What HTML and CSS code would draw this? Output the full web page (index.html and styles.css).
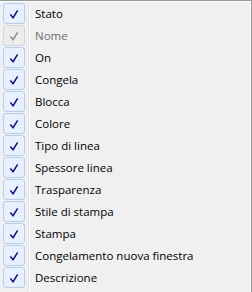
FILE: index.html
```html
<!DOCTYPE html>
<html>
<head>
    <title>Colonne</title>
    <link rel="stylesheet" href="styles.css">
</head>
<body>
    <div class="menu">
        <div class="item"><span class="box"><svg viewBox="0 0 22 21"><path d="M7 10.5 L10 14 L15 6"/></svg></span><span class="label">Stato</span></div>
        <div class="item disabled"><span class="box"><svg viewBox="0 0 22 21"><path d="M7 10.5 L10 14 L15 6"/></svg></span><span class="label">Nome</span></div>
        <div class="item"><span class="box"><svg viewBox="0 0 22 21"><path d="M7 10.5 L10 14 L15 6"/></svg></span><span class="label">On</span></div>
        <div class="item"><span class="box"><svg viewBox="0 0 22 21"><path d="M7 10.5 L10 14 L15 6"/></svg></span><span class="label">Congela</span></div>
        <div class="item"><span class="box"><svg viewBox="0 0 22 21"><path d="M7 10.5 L10 14 L15 6"/></svg></span><span class="label">Blocca</span></div>
        <div class="item"><span class="box"><svg viewBox="0 0 22 21"><path d="M7 10.5 L10 14 L15 6"/></svg></span><span class="label">Colore</span></div>
        <div class="item"><span class="box"><svg viewBox="0 0 22 21"><path d="M7 10.5 L10 14 L15 6"/></svg></span><span class="label">Tipo di linea</span></div>
        <div class="item"><span class="box"><svg viewBox="0 0 22 21"><path d="M7 10.5 L10 14 L15 6"/></svg></span><span class="label">Spessore linea</span></div>
        <div class="item"><span class="box"><svg viewBox="0 0 22 21"><path d="M7 10.5 L10 14 L15 6"/></svg></span><span class="label">Trasparenza</span></div>
        <div class="item"><span class="box"><svg viewBox="0 0 22 21"><path d="M7 10.5 L10 14 L15 6"/></svg></span><span class="label">Stile di stampa</span></div>
        <div class="item"><span class="box"><svg viewBox="0 0 22 21"><path d="M7 10.5 L10 14 L15 6"/></svg></span><span class="label">Stampa</span></div>
        <div class="item"><span class="box"><svg viewBox="0 0 22 21"><path d="M7 10.5 L10 14 L15 6"/></svg></span><span class="label">Congelamento nuova finestra</span></div>
        <div class="item"><span class="box"><svg viewBox="0 0 22 21"><path d="M7 10.5 L10 14 L15 6"/></svg></span><span class="label">Descrizione</span></div>
    </div>
</body>
</html>
```
FILE: styles.css
```css
html, body { margin: 0; padding: 0; background: #f0f0f0; }
body { width: 252px; height: 292px; overflow: hidden; font-family: "Open Sans", "Noto Sans", sans-serif; font-size: 11.5px; color: #000; }
.menu { position: relative; height: 292px; box-sizing: border-box; border-top: 1px solid #979797; border-right: 1px solid #979797; box-shadow: inset 0 1px 0 #fcfcfc, inset -1px 0 0 #fcfcfc; padding-top: 1px; }
.menu::before { content: ""; position: absolute; left: 28px; top: 1px; bottom: 0; width: 1px; background: #e2e3e3; border-right: 1px solid #fff; }
.item { display: flex; align-items: center; height: 22px; }
.box { width: 22px; height: 21px; margin-left: 3px; box-sizing: border-box; border: 1px solid #aecff7; border-radius: 3px; background: #e8f0fb; display: flex; }
.box svg { width: 22px; height: 21px; }
.box path { fill: none; stroke: #0c0c9a; stroke-width: 1.6; }
.label { margin-left: 10px; line-height: 22px; padding-top: 1px; }
.disabled .box { border-color: #d6d6d6; background: #ececec; }
.disabled .box path { stroke: #8d8d8d; }
.disabled .label { color: #6d6d6d; }
```
